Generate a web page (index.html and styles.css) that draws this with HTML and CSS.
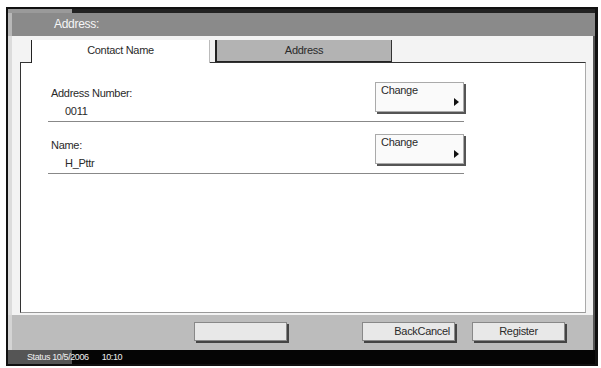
FILE: index.html
```html
<!DOCTYPE html>
<html lang="en">
<head>
  <meta charset="UTF-8" />
  <title>Address</title>
  <link rel="stylesheet" href="styles.css">
</head>
<body>
  <div class="frame">
    <div class="top-strip"></div>
    <div class="title-bar">Address:</div>
    <div class="main">
      <div class="tabs">
        <div class="tab active">Contact Name</div>
        <div class="tab">Address</div>
      </div>
      <div class="panel">
        <div class="row">
          <div class="info">
            <div class="label">Address Number:</div>
            <div class="value">0011</div>
          </div>
          <div class="change-btn">Change<span class="arrow"></span></div>
        </div>
        <div class="row">
          <div class="info">
            <div class="label">Name:</div>
            <div class="value">H_Pttr</div>
          </div>
          <div class="change-btn">Change<span class="arrow"></span></div>
        </div>
      </div>
    </div>
    <div class="button-bar">
      <div class="btn blank"></div>
      <div class="btn back">BackCancel</div>
      <div class="btn register">Register</div>
    </div>
    <div class="status-bar">
      <span class="status-date">Status 10/5/2006</span>
      <span class="status-time">10:10</span>
    </div>
  </div>
</body>
</html>
```

FILE: styles.css
```css
body {
  margin: 0;
  background: #fff;
  font-family: "Liberation Sans", Arial, sans-serif;
  font-size: 11px;
  color: #2a2a2a;
  letter-spacing: -0.3px;
}
.frame {
  margin: 7px 0 0 6px;
  width: 587px;
  height: 355px;
  border: 2px solid #111;
  border-right-width: 3px;
  display: flex;
  flex-direction: column;
  background: #f3f3f3;
}
.top-strip {
  height: 4px;
  background: linear-gradient(to right, #9a9a9a 64px, #222 64px);
}
.title-bar {
  height: 23px;
  line-height: 23px;
  background: #8a8a8a;
  color: #f6f6f6;
  font-size: 12px;
  padding-left: 42px;
  border-left: 4px solid #b8b8b8;
  box-sizing: border-box;
}
.main {
  height: 279px;
  padding: 0 7px 2px 8px;
  border-left: 4px solid #dcdcdc;
  border-right: 2px solid #555;
  box-sizing: border-box;
  display: flex;
  flex-direction: column;
}
.tabs {
  height: 26px;
  padding-top: 4px;
  padding-left: 11px;
  box-sizing: border-box;
  display: flex;
  gap: 5px;
  align-items: flex-end;
}
.tab {
  width: 177px;
  height: 22px;
  line-height: 20px;
  text-align: center;
  box-sizing: border-box;
  background: #b3b3b3;
  border-left: 2px solid #222;
  border-right: 1px solid #333;
  border-bottom: 1px solid #222;
}
.tab.active {
  width: 179px;
  height: 23px;
  margin-bottom: -1px;
  background: #fff;
  border-left: 1px solid #222;
  border-right: 1px solid #bbb;
  border-bottom: none;
  position: relative;
  z-index: 1;
}
.panel {
  flex: 1;
  background: #fff;
  border-top: 1px solid #333;
  border-left: 1px solid #333;
  border-right: 1px solid #aaa;
  border-bottom: 1px solid #999;
  padding: 19px 0 0 27px;
}
.row {
  width: 416px;
  height: 39px;
  border-bottom: 1px solid #888;
  display: flex;
  justify-content: space-between;
  margin-bottom: 12px;
}
.info {
  padding-top: 4px;
}
.label {
  line-height: 14px;
  padding-left: 3px;
}
.value {
  line-height: 18px;
  padding-left: 17px;
  margin-top: 2px;
}
.change-btn {
  position: relative;
  width: 89px;
  height: 30px;
  box-sizing: border-box;
  background: #fafafa;
  border: 1px solid #aaa;
  box-shadow: 2px 2px 0 #555;
  padding: 1px 0 0 5px;
  line-height: 12px;
}
.arrow {
  position: absolute;
  right: 4px;
  bottom: 5px;
  border-top: 4px solid transparent;
  border-bottom: 4px solid transparent;
  border-left: 5px solid #111;
}
.button-bar {
  height: 35px;
  background: #bcbcbc;
  border-left: 4px solid #d4d4d4;
  border-right: 2px solid #555;
  box-sizing: border-box;
  display: flex;
  padding: 7px 0 0 182px;
}
.btn {
  width: 93px;
  height: 19px;
  box-sizing: border-box;
  background: #e8e8e8;
  border: 1px solid #888;
  box-shadow: 2px 2px 0 #444;
  line-height: 17px;
}
.btn.back {
  margin-left: 75px;
  text-align: right;
  padding-right: 4px;
}
.btn.register {
  margin-left: 17px;
  text-align: center;
}
.status-bar {
  flex: 1;
  background: linear-gradient(to right, #555 64px, #050505 64px);
  color: #f0f0f0;
  font-size: 9px;
  letter-spacing: -0.4px;
  display: flex;
  align-items: center;
  padding-left: 19px;
}
.status-time {
  margin-left: 13px;
}
```
